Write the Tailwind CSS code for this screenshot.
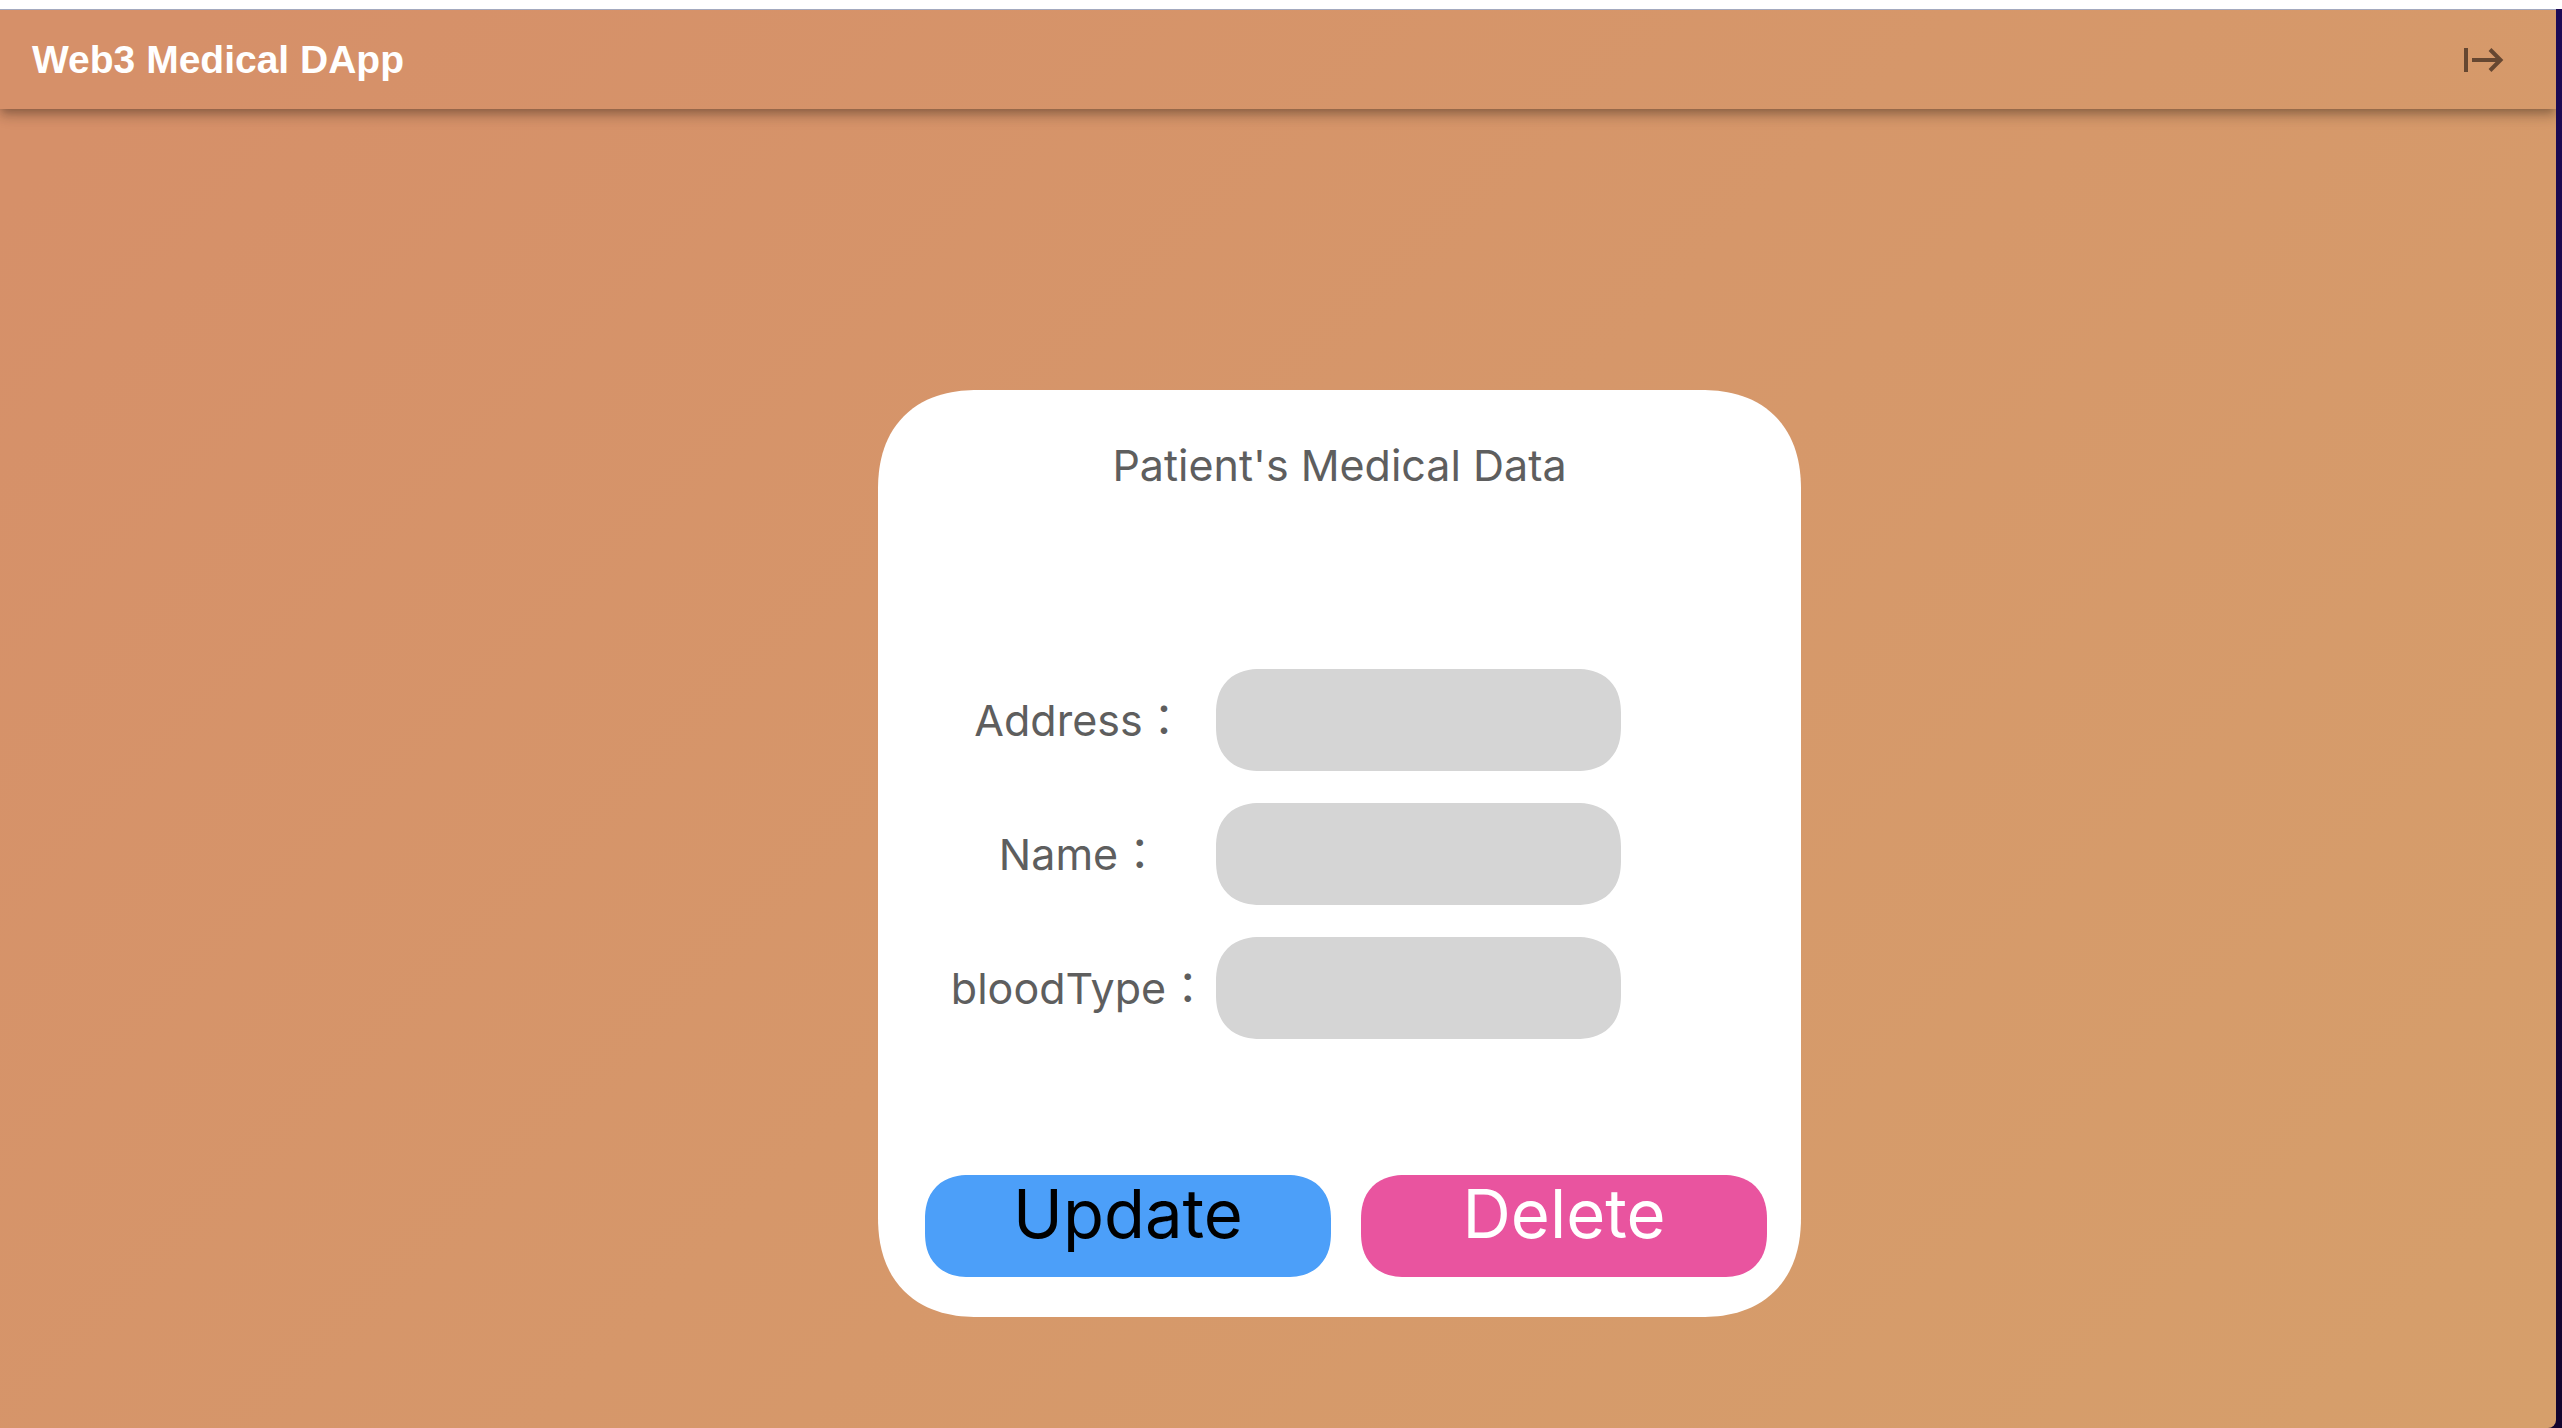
<!DOCTYPE html>
<html lang="en">
<head>
<meta charset="utf-8">
<meta name="viewport" content="width=device-width, initial-scale=1">
<title>Web3 Medical DApp</title>
<script src="https://cdn.jsdelivr.net/npm/@tailwindcss/browser@4"></script>
</head>
<body class="bg-white">
<div class="flex min-h-screen flex-col pt-[9px]">
  <div class="flex grow flex-col bg-linear-to-b from-[#1c0a56] to-[#12042e] pr-[6px]">
    <div class="flex grow flex-col overflow-hidden rounded-br-[8px] border-t border-[#a3a9bf] bg-linear-[135deg] from-[#d69069] from-5% to-[#d69f6b]">
      <header class="flex h-[99px] items-center justify-between pr-[48px] pl-8 shadow-[0_4px_8px_-2px_rgba(0,0,0,0.2),0_8px_10px_0_rgba(0,0,0,0.14),0_2px_20px_0_rgba(0,0,0,0.12)]">
        <h1 class="font-['Liberation_Sans',sans-serif] text-[39px] leading-[48px] font-bold text-white">Web3 Medical DApp</h1>
        <button type="button" aria-label="Log out" class="text-[#664731]">
          <svg class="h-[28px] w-[44px]" viewBox="0 0 44 28" fill="none" stroke="currentColor" stroke-width="4" aria-hidden="true">
            <path d="M2 2V26M8 14H36M26 3.500L36.500 14L26 24.500"/>
          </svg>
        </button>
      </header>
      <main class="flex justify-center pt-[281px] pb-[100px] pl-[123px] font-['Inter','Noto_Sans_CJK_JP',sans-serif] text-[43px] leading-[56px] text-[#5e5e5e]">
        <form class="w-[923px] rounded-[100px] bg-white pt-[47px] pb-10 [corner-shape:superellipse(1.2)]">
          <h2 class="text-center">Patient's Medical Data</h2>
          <div class="mt-[176px] flex flex-col gap-8 pl-[72px]">
            <div class="flex items-center gap-[6px]">
              <label for="address" class="w-[260px] text-center whitespace-nowrap">Address：</label>
              <input id="address" type="text" class="h-[102px] w-[405px] rounded-[44px] bg-[#d5d5d5] px-8 [corner-shape:superellipse(1.2)]">
            </div>
            <div class="flex items-center gap-[6px]">
              <label for="name" class="w-[260px] text-center whitespace-nowrap">Name：</label>
              <input id="name" type="text" class="h-[102px] w-[405px] rounded-[44px] bg-[#d5d5d5] px-8 [corner-shape:superellipse(1.2)]">
            </div>
            <div class="flex items-center gap-[6px]">
              <label for="blood" class="w-[260px] text-center whitespace-nowrap">bloodType：</label>
              <input id="blood" type="text" class="h-[102px] w-[405px] rounded-[44px] bg-[#d5d5d5] px-8 [corner-shape:superellipse(1.2)]">
            </div>
          </div>
          <div class="mt-[136px] flex gap-[30px] pl-[47px] text-[67px] leading-[78px]">
            <button type="button" class="flex h-[102px] w-[406px] items-start justify-center rounded-[44px] bg-[#4c9ff9] text-black [corner-shape:superellipse(1.2)]">Update</button>
            <button type="button" class="flex h-[102px] w-[406px] items-start justify-center rounded-[44px] bg-[#e9549f] text-white [corner-shape:superellipse(1.2)]">Delete</button>
          </div>
        </form>
      </main>
    </div>
  </div>
</div>
</body>
</html>
